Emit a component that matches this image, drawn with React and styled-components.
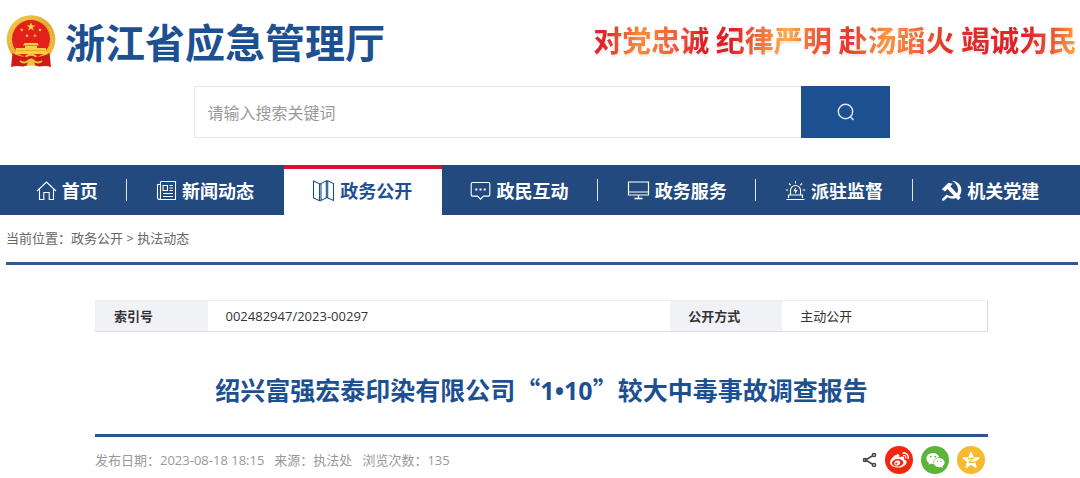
import React from 'react';
import styled, { createGlobalStyle } from 'styled-components';
import { FaWeibo, FaWeixin } from 'react-icons/fa';

const GlobalStyle = createGlobalStyle`
    * {
        box-sizing: border-box;
    }

    body {
        margin: 0;
        background: #fff;
        color: #333;
        font-family: "Open Sans", "Noto Sans CJK SC", sans-serif;
        font-size: 13px;
        line-height: 20px;
    }

    a {
        color: inherit;
        text-decoration: none;
    }
`;

const Header = styled.header`
    padding: 0 2px 0 6px;
`;

const HeaderTop = styled.div`
    display: flex;
    justify-content: space-between;
    align-items: center;
    padding: 13px 0 17px;
`;

const Brand = styled.a`
    display: flex;
    align-items: center;
    gap: 9px;
    color: #1d5091;
    font: bold 40px/56px "Noto Sans CJK SC", sans-serif;
`;

const Slogan = styled.p`
    margin: 0;
    padding: 0 1px 4px 0;
    font: bold 29px/40px "Noto Sans CJK SC", sans-serif;
    color: transparent;
    background: linear-gradient(100deg,
        #e0242a 3%, #fb8c3c 10%, #f4603a 17%, #dd2028 23%, #dd2028 29%,
        #f4683a 34%, #fdae4a 40%, #ee5a38 46%, #e23c30 53%, #fa9440 60%,
        #f2683c 67%, #e0302c 73%, #dc2028 88%, #ec5634 94%, #fcb848 100%);
    background-clip: text;
    filter: drop-shadow(0 2px 1px rgba(0, 0, 0, 0.1));
`;

const SearchForm = styled.form`
    display: flex;
    width: 65%;
    height: 52px;
    margin: 0 auto;
`;

const SearchInput = styled.input`
    flex: 1;
    min-width: 0;
    padding: 0 13px;
    border: 1px solid #e6e6e6;
    border-right: 0;
    border-radius: 0;
    font: 16px/24px "Noto Sans CJK SC", sans-serif;
    color: #333;

    &::placeholder {
        color: #999;
    }
`;

const SearchButton = styled.button`
    display: flex;
    align-items: center;
    justify-content: center;
    width: 89px;
    padding: 0;
    border: 0;
    background: #1d5091;
    color: #dfe8f3;
    cursor: pointer;
`;

const Nav = styled.nav`
    margin-top: 27px;
    background: #234a7e;
`;

const NavList = styled.ul`
    display: flex;
    height: 50px;
    margin: 0;
    padding: 0 11px 0 7px;
    list-style: none;
`;

const NavItem = styled.li`
    display: flex;
    flex: 1 1 auto;
    align-items: center;
    background: ${props => (props.$active ? '#fff' : 'transparent')};
    box-shadow: ${props => (props.$active ? 'inset 0 4px #d9112f' : 'none')};
    color: ${props => (props.$active ? '#1d5091' : '#fff')};
`;

const NavLink = styled.a`
    display: flex;
    flex: 1;
    align-items: center;
    justify-content: center;
    gap: 5px;
    height: 22px;
    border-right: 1px solid ${props => (props.$divider ? '#dfe6ef' : 'transparent')};
    font: bold 18px/22px "Noto Sans CJK SC", sans-serif;
    white-space: nowrap;
`;

const Main = styled.main`
    padding: 0 2px 0 6px;
`;

const Breadcrumb = styled.div`
    padding: 13px 0 14px;
    border-bottom: 3px solid #2f5896;
    color: #666;
`;

const Article = styled.article`
    padding: 35px 90px 0 89px;
`;

const InfoTable = styled.table`
    width: 100%;
    table-layout: fixed;
    border-collapse: collapse;
    border: 1px solid #dedede;
    border-top-color: #eee;
    border-left-color: #eee;
`;

const InfoLabel = styled.th`
    width: 112px;
    padding: 5px 18px;
    background: #f1f2f6;
    text-align: left;
`;

const InfoValue = styled.td`
    width: ${props => props.$width};
    padding: 5px 18px;
`;

const Title = styled.h1`
    margin: 0;
    padding: 39px 0 26px;
    border-bottom: 3px solid #2a5594;
    color: #1d5091;
    font: bold 25px/36px "Noto Sans CJK SC", sans-serif;
    text-align: center;
`;

const TitleDate = styled.span`
    font-family: "Open Sans", sans-serif;
`;

const ArticleBar = styled.div`
    display: flex;
    align-items: center;
    justify-content: space-between;
    padding: 9px 3px 0 0;
`;

const Meta = styled.div`
    display: flex;
    gap: 10px;
    color: #999;
`;

const Share = styled.div`
    display: flex;
    align-items: center;
    gap: 8px;
    color: #444;
`;

const ShareLink = styled.a`
    display: flex;
    align-items: center;
    justify-content: center;
    width: 28px;
    height: 28px;
    border-radius: 50%;
    background: ${props => props.$color};
    color: #fff;
`;

const LineIcon = ({ size = 21, children }) => (
    <svg width={size} height={size} viewBox="0 0 21 21" fill="none" stroke="currentColor" strokeWidth="1.1" aria-hidden="true">
        {children}
    </svg>
);

const HomeIcon = () => (
    <LineIcon>
        <path d="M1 11 10.5 2 20 11M3.5 9v10.5h4.3v-7h5.4v7h4.3V9" />
    </LineIcon>
);

const NewsIcon = () => (
    <LineIcon>
        <path d="M4.500 1.500h15v18H3.200c-1 0-1.700-.8-1.700-1.700V4.500h3M4.500 1.500v16.300c0 1-.5 1.700-1.300 1.700" />
        <path d="M7 5.500h4.500v5H7zM13.500 5.500h3.500M13.500 8h3.500M13.500 10.500h3.500M7 13.500h10M7 16.500h10" />
    </LineIcon>
);

const MapIcon = () => (
    <svg width="23" height="23" viewBox="0 0 23 23" fill="none" stroke="currentColor" strokeWidth="1.1" aria-hidden="true">
        <path d="M1.500 2 8 5l7-3.500 6.500 3v17L15 18.500 8 22l-6.500-3zM7.500 5v16.500M9 4.500v17M14.300 2v16.500M15.700 2v16.500" />
    </svg>
);

const ChatIcon = () => (
    <LineIcon>
        <path d="M2.500 2.500h16c.8 0 1.300.5 1.300 1.300v11c0 .8-.5 1.300-1.300 1.300h-5l-3 3-3-3h-5c-.8 0-1.300-.5-1.300-1.300v-11c0-.8.5-1.300 1.300-1.300z" />
        <path d="M5.300 9.500h2M9.500 9.500h2M13.700 9.500h2" strokeWidth="2" />
    </LineIcon>
);

const MonitorIcon = () => (
    <svg width="23" height="21" viewBox="0 0 23 21" fill="none" stroke="currentColor" strokeWidth="1.2" aria-hidden="true">
        <path d="M1.500 2h20v13h-20zM1.500 12h20M11.500 15v3.500" />
        <path d="M7.500 18.500h8" strokeWidth="1.6" />
    </svg>
);

const AlarmIcon = () => (
    <LineIcon>
        <path d="M5.500 15V10.500a5 5 0 0 1 10 0V15M3.500 18v-3h14v3M1.500 19.500h18M10.500 1v2.500M4 3.500l1.700 1.700M17 3.500l-1.700 1.700M.8 10h2.400M17.800 10h2.400" />
        <path d="M10.800 8 9.300 10.600h2.400L10.200 13.200" />
    </LineIcon>
);

const PartyIcon = () => (
    <svg width="21" height="21" viewBox="0 0 21 21" fill="currentColor" aria-hidden="true">
        <path d="M10.800.4c5.600.7 9.600 4.500 9.600 9.300 0 5.300-4 9-8.700 9-2 0-3.600-.5-5-1.400L3 20.500c-.5.5-1.300.4-1.700 0-.5-.5-.5-1.200 0-1.700l4.500-4.300c1.500 1.200 3.200 1.800 5 1.700 3.600-.2 6.200-2.800 6.200-6.400 0-3.800-2.500-7.200-6.200-9.400z" />
        <path d="m.8 9.200 6.700-6.500 4.300 1.100-2.500 2.500 10.400 11.300-2.500 2.600L6.500 9.100 4 11.600z" />
    </svg>
);

const star = 'M0-1 .235-.324.951-.309.38.124.588.809 0 .4-.588.809-.38.124-.951-.309-.235-.324z';

const Emblem = () => (
    <svg width="50" height="53" viewBox="0 0 50 53" role="img" aria-label="国徽">
        <defs>
            <linearGradient id="gold" x1="0" y1="0" x2="1" y2="1">
                <stop offset="0" stopColor="#f7cf4e" />
                <stop offset="0.5" stopColor="#e3a72b" />
                <stop offset="1" stopColor="#f0bd3c" />
            </linearGradient>
        </defs>
        <circle cx="25" cy="24.500" r="24.300" fill="url(#gold)" />
        <circle cx="25" cy="24.500" r="21.300" fill="none" stroke="#f3cb55" strokeWidth="1" strokeDasharray="2 1.500" />
        <circle cx="25" cy="24" r="19" fill="#e2211b" />
        <g fill="#f9cf45">
            <path d={star} transform="translate(25 11.800) scale(4.600)" />
            <path d={star} transform="translate(15.800 15) scale(2)" />
            <path d={star} transform="translate(34 15) scale(2)" />
            <path d={star} transform="translate(21 20.800) scale(2)" />
            <path d={star} transform="translate(29 20.800) scale(2)" />
            <path d="M18.500 28h13l1.500 2.500H17zM19 31h12v2H19zM10 33h30l1 6H9z" />
        </g>
        <path d="M11 35.500h28" stroke="#e3ac30" />
        <path d="M6.500 38c5 3.500 11 4 13 3.500l2-2h7l2 2c2 .5 8 0 13-3.500l1.500 14c-4-1.500-8-1-12-.5l-8-2-8 2c-4-.5-8-1-12 .5z" fill="#cf1b18" />
        <path d="M20 42c1-3 9-3 10 0M14 46c3 2 6 1.500 8 0l3 1.500 3-1.500c2 1.500 5 2 8 0M21 49.500h8" fill="none" stroke="#f2c03a" strokeWidth="2" />
        <circle cx="25" cy="47" r="3.500" fill="#f2c03a" />
    </svg>
);

const SearchIcon = () => (
    <svg width="18" height="18" viewBox="0 0 18 18" fill="none" stroke="currentColor" strokeWidth="1.4" aria-hidden="true">
        <circle cx="8.500" cy="8.500" r="7.200" />
        <path d="m13 13.500 3.500 3.500" />
    </svg>
);

const ShareIcon = () => (
    <svg width="15" height="16" viewBox="0 0 15 16" fill="none" stroke="currentColor" strokeWidth="1.5" aria-hidden="true">
        <path d="M11 3.500 3.500 8l7.500 4.500" />
        <circle cx="12" cy="3" r="1.600" />
        <circle cx="3" cy="8" r="1.600" />
        <circle cx="12" cy="13" r="1.600" />
    </svg>
);

const QzoneIcon = () => (
    <svg width="18" height="18" viewBox="0 0 18 18" aria-hidden="true">
        <path d={star} transform="translate(9 9.500) scale(8)" fill="#fff" stroke="#fff" strokeWidth=".22" strokeLinejoin="round" />
        <path d="M6 7.600c2-.4 4-.4 5.500 0L7 11.200c2.300.5 4.400.4 6-.2" fill="none" stroke="#f6ba2f" strokeWidth="1.1" />
    </svg>
);

const navItems = [
    { label: '首页', Icon: HomeIcon, divider: true },
    { label: '新闻动态', Icon: NewsIcon },
    { label: '政务公开', Icon: MapIcon, active: true },
    { label: '政民互动', Icon: ChatIcon, divider: true },
    { label: '政务服务', Icon: MonitorIcon, divider: true },
    { label: '派驻监督', Icon: AlarmIcon, divider: true },
    { label: '机关党建', Icon: PartyIcon }
];

const App = () => (
    <>
        <GlobalStyle />
        <Header>
            <HeaderTop>
                <Brand href="#">
                    <Emblem />
                    浙江省应急管理厅
                </Brand>
                <Slogan>对党忠诚 纪律严明 赴汤蹈火 竭诚为民</Slogan>
            </HeaderTop>
            <SearchForm onSubmit={e => e.preventDefault()}>
                <SearchInput type="text" aria-label="搜索" placeholder="请输入搜索关键词" />
                <SearchButton type="submit" aria-label="搜索">
                    <SearchIcon />
                </SearchButton>
            </SearchForm>
        </Header>
        <Nav>
            <NavList>
                {navItems.map(({ label, Icon, active, divider }) => (
                    <NavItem key={label} $active={active}>
                        <NavLink href="#" $divider={divider}>
                            <Icon />
                            {label}
                        </NavLink>
                    </NavItem>
                ))}
            </NavList>
        </Nav>
        <Main>
            <Breadcrumb>
                当前位置：<a href="#">政务公开</a> &gt; <a href="#">执法动态</a>
            </Breadcrumb>
            <Article>
                <InfoTable>
                    <tbody>
                        <tr>
                            <InfoLabel scope="row">索引号</InfoLabel>
                            <InfoValue>002482947/2023-00297</InfoValue>
                            <InfoLabel scope="row">公开方式</InfoLabel>
                            <InfoValue $width="23%">主动公开</InfoValue>
                        </tr>
                    </tbody>
                </InfoTable>
                <Title lang="zh-CN">
                    绍兴富强宏泰印染有限公司“<TitleDate>1•10</TitleDate>”较大中毒事故调查报告
                </Title>
                <ArticleBar>
                    <Meta>
                        <span>发布日期：2023-08-18 18:15</span>
                        <span>来源：执法处</span>
                        <span>浏览次数：135</span>
                    </Meta>
                    <Share>
                        <ShareIcon />
                        <ShareLink href="#" aria-label="微博" $color="#f4260e">
                            <FaWeibo size={19} />
                        </ShareLink>
                        <ShareLink href="#" aria-label="微信" $color="#5cb53a">
                            <FaWeixin size={19} />
                        </ShareLink>
                        <ShareLink href="#" aria-label="QQ空间" $color="#f6ba2f">
                            <QzoneIcon />
                        </ShareLink>
                    </Share>
                </ArticleBar>
            </Article>
        </Main>
    </>
);

export default App;
